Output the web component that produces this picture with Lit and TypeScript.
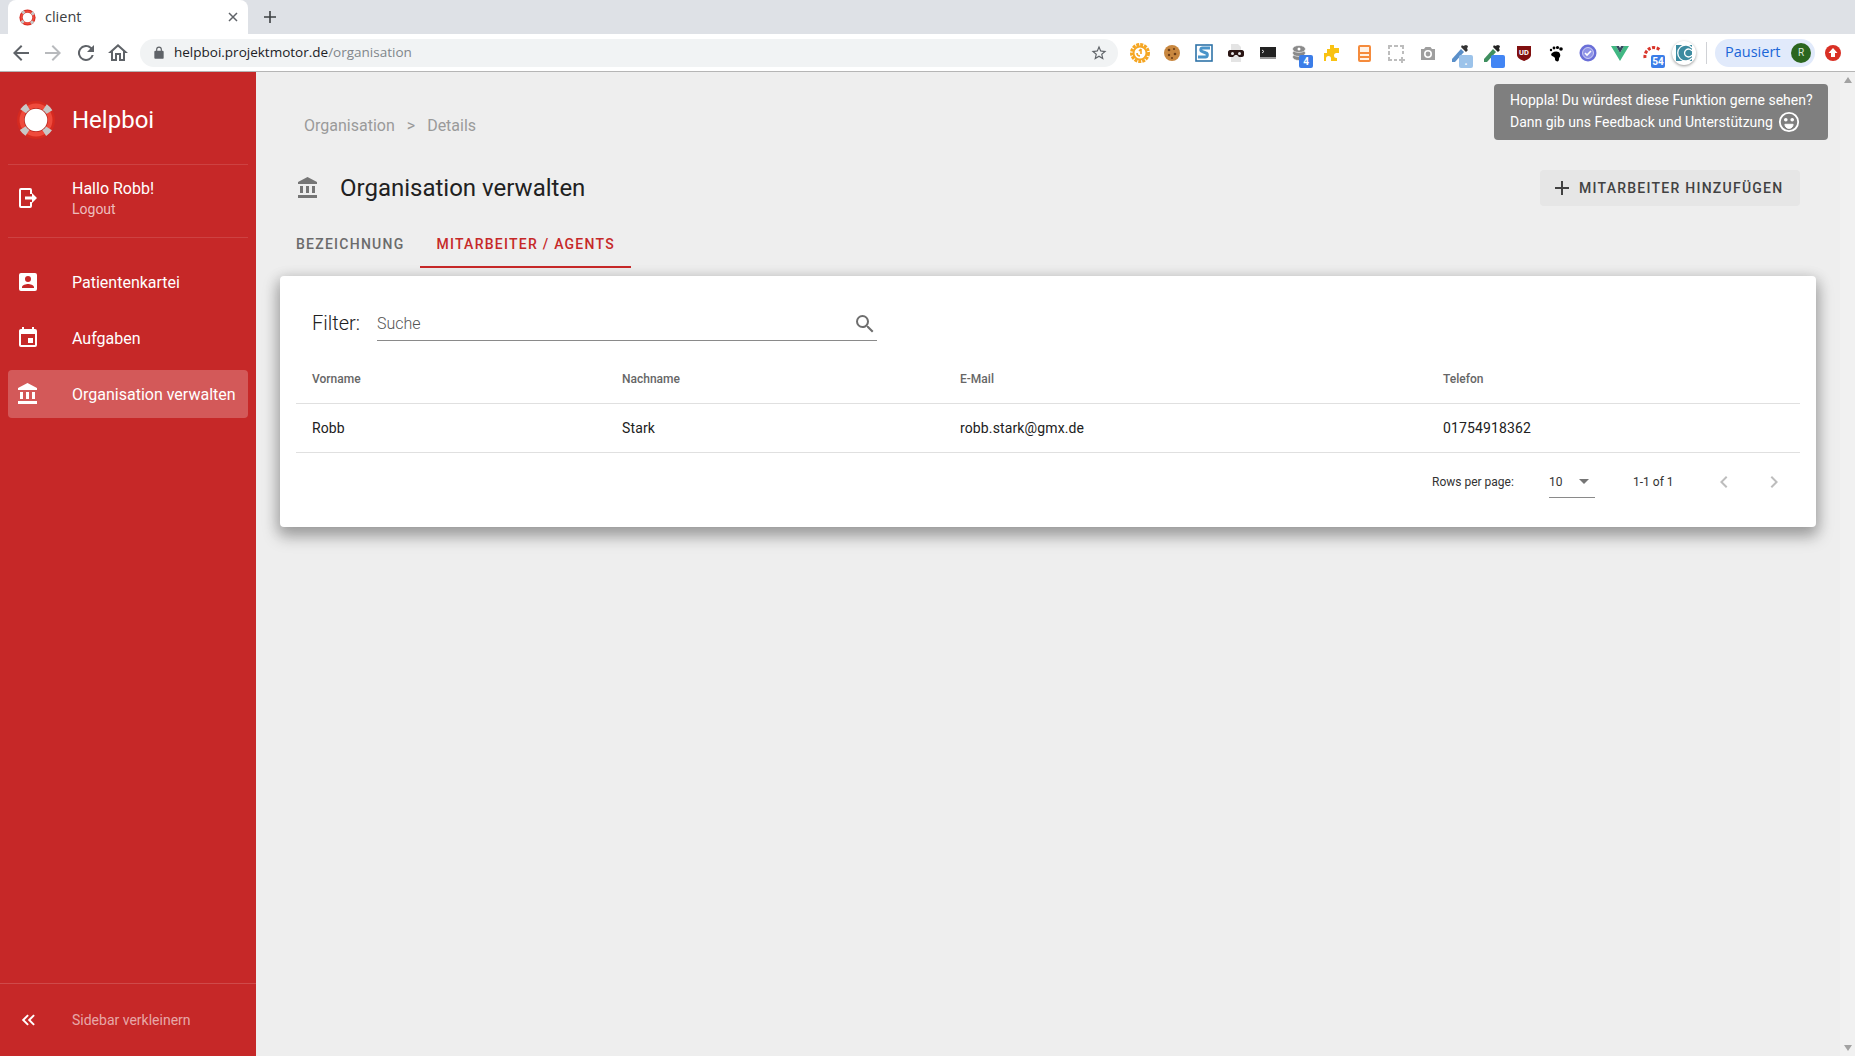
import { LitElement, css, html, svg } from "lit";
import { customElement } from "lit/decorators.js";

const bankIcon = svg`<path d="M4 10v7h3v-7H4zm6 0v7h3v-7h-3zM2 22h19v-3H2v3zm14-12v7h3v-7h-3zm-4.500-9L2 6v2h19V6l-9.500-5z"/>`;
const logoutIcon = svg`<path d="M15 8V4a1 1 0 0 0-1-1H5a1 1 0 0 0-1 1v16a1 1 0 0 0 1 1h9a1 1 0 0 0 1-1v-4" fill="none" stroke="#fff" stroke-width="2"/><path d="M9 10.500h7v-3.500l5 5-5 5v-3.500H9z"/>`;
const cardIcon = svg`<path d="M19 3H5a2 2 0 0 0-2 2v14a2 2 0 0 0 2 2h14a2 2 0 0 0 2-2V5a2 2 0 0 0-2-2zm-7 3a3 3 0 1 1 0 6 3 3 0 0 1 0-6zm6 12H6v-1c0-2 4-3.100 6-3.100s6 1.100 6 3.100v1z"/>`;
const calendarIcon = svg`<path d="M19 19H5V8h14m-3-7v2H8V1H6v2H5c-1.110 0-2 .89-2 2v14a2 2 0 0 0 2 2h14a2 2 0 0 0 2-2V5a2 2 0 0 0-2-2h-1V1m-1 11h-5v5h5v-5z"/>`;

function logo(size: number) {
  return html`<svg width=${size} height=${size} viewBox="0 0 40 40">
    <circle cx="20" cy="20" r="19" fill="#d62a20"/>
    <circle cx="20" cy="20" r="16.500" fill="#ef4a3c"/>
    <circle cx="20" cy="20" r="15.250" fill="none" stroke="#c8c8c8" stroke-width="7.500" stroke-dasharray="6.500 17.450" stroke-dashoffset="-8.730"/>
    <circle cx="20" cy="20" r="12" fill="#b3201a"/>
    <circle cx="20" cy="20" r="11.300" fill="#fff"/>
  </svg>`;
}

const extensions = [
  html`<svg width="20" height="20" viewBox="0 0 20 20"><circle cx="10" cy="10" r="8.500" fill="none" stroke="#f5a623" stroke-width="3" stroke-dasharray="3 1"/><circle cx="10" cy="10" r="6.500" fill="none" stroke="#f5a623" stroke-width="2"/><path d="M7 10a3 3 0 0 0 3 3M11 6v5M9 8l2-2" fill="none" stroke="#f5a623" stroke-width="1.600"/></svg>`,
  html`<svg width="20" height="20" viewBox="0 0 20 20"><circle cx="10" cy="10" r="8" fill="#c8873f"/><g fill="#6b3d17"><circle cx="7" cy="7" r="1.300"/><circle cx="12" cy="6" r="1.100"/><circle cx="13" cy="11" r="1.300"/><circle cx="7" cy="12" r="1.200"/><circle cx="10" cy="15" r="1"/></g></svg>`,
  html`<svg width="20" height="20" viewBox="0 0 20 20"><rect x="2" y="2" width="16" height="16" fill="#fff" stroke="#2f73a8" stroke-width="1.600"/><path d="M16 5H8.500c-2 0-2.500 3 0 3.600L12 10c2 .7 1.600 4-.5 4H4" fill="none" stroke="#4a94c9" stroke-width="3"/></svg>`,
  html`<svg width="20" height="20" viewBox="0 0 20 20"><path d="M5 1h7l3 3v15H5z" fill="#e4e4e4"/><path d="M2 9c0-1 1-2 2-2h12c1 0 2 1 2 2v3c0 1-1 2-2 2h-3l-2-2H9l-2 2H4c-1 0-2-1-2-2z" fill="#2a1614"/><circle cx="6.500" cy="10.500" r="1.500" fill="#e8e8e8"/><circle cx="13.500" cy="10.500" r="1.500" fill="#e8e8e8"/></svg>`,
  html`<svg width="20" height="20" viewBox="0 0 20 20"><rect x="2" y="4" width="16" height="12" fill="#222"/><rect x="2" y="14" width="16" height="2" fill="#999"/><path d="M4 7l2 1.500L4 10" fill="none" stroke="#ddd" stroke-width="1"/></svg>`,
  html`<svg width="20" height="20" viewBox="0 0 20 20"><g fill="#8a8a8a" stroke="#fff" stroke-width=".6"><ellipse cx="9" cy="14" rx="6.500" ry="3.500"/><ellipse cx="9" cy="10" rx="6.500" ry="3.500"/><ellipse cx="9" cy="6" rx="6.500" ry="3.500"/></g><circle cx="9" cy="6" r="1.500" fill="#fff"/></svg><span class="badge">4</span>`,
  html`<svg width="20" height="20" viewBox="0 0 20 20"><path d="M8 2h4v3h5v5h-2.500a2.500 2.500 0 0 0 0 5H15v3H9v-2.500a2.500 2.500 0 0 0-5 0V18H2v-8h3V6h3z" fill="#f9c213"/></svg>`,
  html`<svg width="20" height="20" viewBox="0 0 20 20"><rect x="4" y="2" width="13" height="17" rx="2" fill="#f58b3c"/><rect x="6" y="4" width="9" height="5" fill="#fff2e6"/><rect x="6" y="11" width="9" height="2" fill="#fff2e6"/><rect x="6" y="15" width="9" height="2" fill="#fff2e6"/></svg>`,
  html`<svg width="20" height="20" viewBox="0 0 20 20" fill="none" stroke="#bdbdbd" stroke-width="2"><path d="M6 3H3v3M8 3h4M14 3h3v3M3 8v4M17 8v3M3 14v3h3M8 17h3M13 17h6M16 14v6"/></svg>`,
  html`<svg width="20" height="20" viewBox="0 0 20 20"><path d="M3 6h3l1.500-2h5L14 6h3v11H3z" fill="#9e9e9e"/><circle cx="10" cy="11" r="3.200" fill="none" stroke="#fff" stroke-width="1.600"/></svg>`,
  html`<svg width="20" height="20" viewBox="0 0 20 20"><path d="M2 16 11 6l3 3-9 10H2z" fill="#5a8fc9"/><path d="M11 4l5 5 2-2-1-1 1-3-2-1-3 1-1-1z" fill="#333"/></svg><span class="swatch" style="background:#9cc3ea">.</span>`,
  html`<svg width="20" height="20" viewBox="0 0 20 20"><path d="M2 16 11 6l3 3-9 10H2z" fill="#3f8f5f"/><path d="M11 4l5 5 2-2-1-1 1-3-2-1-3 1-1-1z" fill="#222"/></svg><span class="swatch" style="background:#4285f4"></span>`,
  html`<svg width="20" height="20" viewBox="0 0 20 20"><path d="M3 3h14v9c0 3-4 5-7 6-3-1-7-3-7-6z" fill="#800f0f"/><text x="10" y="12" font-size="7.500" text-anchor="middle" fill="#fff" font-family="Roboto, sans-serif" font-weight="700">UD</text></svg>`,
  html`<svg width="20" height="20" viewBox="0 0 20 20"><path d="M6 10c3-2 7-2 8 1 1 3-1 3-1 5s-1 3-3 2 0-3-2-4-4-2-2-4z" fill="#000"/><g fill="#000"><circle cx="5" cy="7" r="1.200"/><circle cx="8" cy="5" r="1.400"/><circle cx="11.500" cy="4.500" r="1.600"/><circle cx="15" cy="6" r="1.800"/></g></svg>`,
  html`<svg width="20" height="20" viewBox="0 0 20 20"><circle cx="10" cy="10" r="8.500" fill="#6a6fd8"/><circle cx="10" cy="10" r="5.500" fill="#8f93e6" stroke="#fff" stroke-width=".6"/><path d="M7 10l2 2 4-4" fill="none" stroke="#fff" stroke-width="1.600"/></svg>`,
  html`<svg width="20" height="20" viewBox="0 0 20 20"><path d="M1 3h5l4 7 4-7h5l-9 15z" fill="#41b883"/><path d="M6 3h3l1 2 1-2h3l-4 7z" fill="#35495e"/></svg>`,
  html`<svg width="20" height="20" viewBox="0 0 20 20"><path d="M3 15a9 9 0 0 1 15-8" fill="none" stroke="#d9352a" stroke-width="3" stroke-dasharray="3 1.500"/></svg><span class="badge">54</span>`,
  html`<span class="ext-disc"><svg width="20" height="20" viewBox="0 0 20 20"><rect x="2" y="2" width="16" height="16" fill="#3c8ba0"/><path d="M18 5a8 8 0 1 0 0 10M18 8a4 4 0 1 0 0 4" fill="none" stroke="#fff" stroke-width="1.300"/></svg></span>`,
];

@customElement("browser-chrome")
export class BrowserChrome extends LitElement {
  static styles = css`
    :host {
      display: block;
      font-family: "Open Sans", "Noto Sans", sans-serif;
    }
    .tabstrip {
      height: 34px;
      background: #dee1e6;
      display: flex;
      padding-left: 8px;
    }
    .tab {
      width: 240px;
      background: #fff;
      border-radius: 8px 8px 0 0;
      display: flex;
      align-items: center;
      padding: 0 10px 0 11px;
      box-sizing: border-box;
      font-size: 14.500px;
      color: #3c4043;
      gap: 9px;
    }
    .tab .title {
      flex: 1;
      padding-bottom: 1px;
    }
    .tab-close {
      display: block;
      width: 10px;
      height: 10px;
    }
    .new-tab {
      margin: 9px 0 0 14px;
      display: block;
    }
    .toolbar {
      height: 37px;
      border-bottom: 1px solid #b5b5b5;
      background: #fff;
      display: flex;
      align-items: center;
      padding-left: 9px;
    }
    .nav {
      display: flex;
      width: 131px;
      gap: 8.300px;
    }
    .nav svg {
      display: block;
    }
    .omnibox {
      width: 978px;
      height: 28px;
      border-radius: 14px;
      background: #f1f3f4;
      display: flex;
      align-items: center;
      box-sizing: border-box;
      padding: 0 10px 0 12px;
      font-size: 13.500px;
      color: #202124;
    }
    .url {
      flex: 1;
      margin-left: 8px;
      padding-bottom: 2px;
    }
    .url span {
      color: #80868b;
    }
    .exts {
      display: flex;
      margin-left: 6px;
    }
    .ext {
      position: relative;
      width: 32px;
      height: 24px;
      display: flex;
      align-items: center;
      justify-content: center;
    }
    .badge,
    .swatch {
      position: absolute;
      right: 3px;
      bottom: -3px;
      min-width: 12px;
      height: 13px;
      border-radius: 2px;
      background: #3b7de8;
      color: #fff;
      font: 700 10px/13px Roboto, sans-serif;
      text-align: center;
      padding: 0 1px;
    }
    .ext-disc {
      width: 24px;
      height: 24px;
      border-radius: 50%;
      background: #fff;
      box-shadow: 0 1px 3px rgba(0, 0, 0, 0.4);
      display: flex;
      align-items: center;
      justify-content: center;
    }
    .sep {
      width: 1px;
      height: 22px;
      background: #d0d2d6;
      margin: 0 8px 0 6px;
    }
    .profile {
      width: 100px;
      height: 28px;
      box-sizing: border-box;
      border-radius: 14px;
      background: #e1eafb;
      color: #1a66d8;
      font-size: 14.500px;
      display: flex;
      align-items: center;
      justify-content: space-between;
      padding: 0 4px 2px 10px;
    }
    .avatar {
      width: 20px;
      height: 20px;
      margin-bottom: -2px;
      border-radius: 50%;
      background: #2b661f;
      color: #dfe8dc;
      font: 10px/20px Roboto, sans-serif;
      text-align: center;
    }
    .update {
      margin-left: 8px;
      display: block;
    }
  `;

  render() {
    return html`
      <div class="tabstrip">
        <div class="tab">
          ${logo(17)}
          <span class="title">client</span>
          <svg class="tab-close" viewBox="0 0 10 10" stroke="#5f6368" stroke-width="1.500"><path d="M1 1l8 8M9 1l-8 8"/></svg>
        </div>
        <svg class="new-tab" width="16" height="16" viewBox="0 0 16 16" stroke="#3c4043" stroke-width="1.600"><path d="M8 2v12M2 8h12"/></svg>
      </div>
      <div class="toolbar">
        <div class="nav">
          ${[
            svg`<path d="M20 11H7.800l5.600-5.600L12 4l-8 8 8 8 1.400-1.400L7.800 13H20z" fill="#5f6368"/>`,
            svg`<path d="M4 11h12.200l-5.600-5.600L12 4l8 8-8 8-1.400-1.400 5.600-5.600H4z" fill="#b8babd"/>`,
            svg`<path d="M17.650 6.350A8 8 0 1 0 19.730 14h-2.080A6 6 0 1 1 12 6c1.660 0 3.140.69 4.220 1.780L13 11h7V4z" fill="#5f6368"/>`,
            svg`<path d="M12 5.700l5 4.500V18h-2v-6H9v6H7v-7.800zM12 3 2 12h3v8h6v-6h2v6h6v-8h3z" fill="#5f6368"/>`,
          ].map((p) => html`<svg width="24" height="24" viewBox="0 0 24 24">${p}</svg>`)}
        </div>
        <div class="omnibox">
          <svg width="14" height="14" viewBox="0 0 24 24" fill="#5f6368"><path d="M18 8h-1V6A5 5 0 0 0 7 6v2H6a2 2 0 0 0-2 2v10c0 1.100.9 2 2 2h12a2 2 0 0 0 2-2V10a2 2 0 0 0-2-2zM9 6a3 3 0 0 1 6 0v2H9z"/></svg>
          <div class="url">helpboi.projektmotor.de<span>/organisation</span></div>
          <svg width="18" height="18" viewBox="0 0 24 24" fill="#5f6368"><path d="m22 9.200-7.200-.6L12 2 9.200 8.600 2 9.200l5.500 4.700L5.800 21l6.200-3.700 6.200 3.700-1.700-7.100zm-10 6.200-3.800 2.300 1-4.300-3.300-2.900 4.400-.4L12 6.100l1.700 4 4.400.4-3.300 2.900 1 4.300z"/></svg>
        </div>
        <div class="exts">${extensions.map((e) => html`<div class="ext">${e}</div>`)}</div>
        <div class="sep"></div>
        <div class="profile">Pausiert<span class="avatar">R</span></div>
        <svg class="update" width="20" height="20" viewBox="0 0 20 20"><circle cx="10" cy="10" r="8" fill="#d93025"/><path d="M10 5l4.500 5H12v4H8v-4H5.500z" fill="#fff"/></svg>
      </div>
    `;
  }
}

@customElement("app-sidebar")
export class AppSidebar extends LitElement {
  static styles = css`
    :host {
      display: flex;
      flex-direction: column;
      width: 256px;
      flex: none;
      background: #c62828;
      color: #fff;
      font-family: Roboto, sans-serif;
      box-sizing: border-box;
      padding: 0 8px;
    }
    .brand {
      height: 93px;
      display: flex;
      align-items: center;
      border-bottom: 1px solid rgba(255, 255, 255, 0.12);
      box-sizing: border-box;
      padding-top: 3px;
    }
    .slot {
      width: 64px;
      flex: none;
      display: flex;
      padding-left: 8px;
      box-sizing: border-box;
    }
    .brand .name {
      font-size: 24px;
      font-weight: 400;
    }
    .user {
      height: 73px;
      box-sizing: border-box;
      padding-bottom: 6px;
      display: flex;
      align-items: center;
      border-bottom: 1px solid rgba(255, 255, 255, 0.12);
    }
    .user .hello {
      font-size: 16px;
      line-height: 22px;
    }
    .user .logout {
      font-size: 14px;
      line-height: 18px;
      color: rgba(255, 255, 255, 0.7);
    }
    nav {
      display: flex;
      flex-direction: column;
      gap: 8px;
      margin-top: 20px;
      flex: 1;
    }
    .item {
      height: 48px;
      display: flex;
      align-items: center;
      border-radius: 4px;
      font-size: 16px;
    }
    .item.active {
      background: rgba(255, 255, 255, 0.23);
    }
    svg {
      display: block;
      fill: #fff;
    }
    .foot {
      height: 73px;
      box-sizing: border-box;
      border-top: 1px solid rgba(255, 255, 255, 0.16);
      margin: 0 -8px;
      padding: 0 8px;
      display: flex;
      align-items: center;
      font-size: 14px;
      color: rgba(255, 255, 255, 0.6);
    }
  `;

  render() {
    const items = [
      { label: "Patientenkartei", icon: cardIcon },
      { label: "Aufgaben", icon: calendarIcon },
      { label: "Organisation verwalten", icon: bankIcon, active: true },
    ];
    return html`
      <div class="brand">
        <div class="slot">${logo(40)}</div>
        <div class="name">Helpboi</div>
      </div>
      <div class="user">
        <div class="slot"><svg width="24" height="24" viewBox="0 0 24 24">${logoutIcon}</svg></div>
        <div>
          <div class="hello">Hallo Robb!</div>
          <div class="logout">Logout</div>
        </div>
      </div>
      <nav>
        ${items.map(
          (i) => html`<div class="item ${i.active ? "active" : ""}">
            <div class="slot"><svg width="24" height="24" viewBox="0 0 24 24">${i.icon}</svg></div>
            ${i.label}
          </div>`,
        )}
      </nav>
      <div class="foot">
        <div class="slot">
          <svg width="24" height="24" viewBox="0 0 24 24"><path d="M11.400 17.600 5.800 12l5.600-5.600 1.400 1.400L8.600 12l4.200 4.200zm6 0L11.800 12l5.600-5.600 1.400 1.400L14.600 12l4.200 4.200z"/></svg>
        </div>
        Sidebar verkleinern
      </div>
    `;
  }
}

@customElement("member-table")
export class MemberTable extends LitElement {
  static styles = css`
    :host {
      display: block;
      background: #fff;
      border-radius: 4px;
      box-shadow: 0 8px 16px 2px rgba(0, 0, 0, 0.28), 0 3px 14px 2px rgba(0, 0, 0, 0.12);
      padding: 16px 16px 0;
      height: 251px;
      box-sizing: border-box;
    }
    .filter {
      display: flex;
      align-items: flex-start;
      padding: 15px 0 0 16px;
      height: 63px;
      box-sizing: border-box;
    }
    .filter label {
      font-size: 20px;
      font-weight: 300;
      color: #212121;
      width: 65px;
      line-height: 32px;
    }
    .search {
      width: 500px;
      height: 33px;
      border-bottom: 1px solid #8a8a8a;
      display: flex;
      align-items: center;
      justify-content: space-between;
      font-size: 16px;
      font-weight: 300;
      color: #555;
    }
    .search svg {
      display: block;
      fill: #6e6e6e;
    }
    .row {
      display: grid;
      grid-template-columns: 310px 338px 483px 1fr;
      border-bottom: 1px solid #e0e0e0;
      font-size: 14px;
      letter-spacing: 0.13px;
      color: #212121;
      align-items: center;
    }
    .row > div {
      padding-left: 16px;
    }
    .head {
      height: 48px;
      font-size: 12px;
      font-weight: 500;
      letter-spacing: 0;
      color: #666;
    }
    .body {
      height: 49px;
      padding-bottom: 1px;
      box-sizing: border-box;
    }
    .pager {
      height: 58px;
      display: flex;
      align-items: center;
      font-size: 12px;
      color: #333;
      padding-left: 1136px;
    }
    .rows-label {
      flex: none;
      width: 117px;
      white-space: nowrap;
    }
    .select {
      flex: none;
      width: 46px;
      height: 32px;
      display: flex;
      align-items: center;
      justify-content: space-between;
      border-bottom: 1px solid #8a8a8a;
      box-sizing: border-box;
    }
    .select svg {
      margin-right: 6px;
    }
    .range {
      flex: none;
      margin-left: 38px;
      width: 79px;
      white-space: nowrap;
    }
    .chev {
      flex: none;
      width: 50px;
      display: flex;
    }
    .chev:last-child {
      width: 38px;
    }
    .chev svg {
      display: block;
      fill: #bdbdbd;
    }
  `;

  render() {
    return html`
      <div class="filter">
        <label>Filter:</label>
        <div class="search">
          <span>Suche</span>
          <svg width="24" height="24" viewBox="0 0 24 24"><path d="M15.500 14h-.79l-.28-.27A6.470 6.470 0 0 0 16 9.500 6.500 6.500 0 1 0 9.500 16c1.610 0 3.090-.59 4.230-1.570l.27.28v.79l5 4.990L20.490 19l-4.990-5zm-6 0C7.010 14 5 11.990 5 9.500S7.010 5 9.500 5 14 7.010 14 9.500 11.990 14 9.500 14z"/></svg>
        </div>
      </div>
      <div class="row head">
        <div>Vorname</div><div>Nachname</div><div>E-Mail</div><div>Telefon</div>
      </div>
      <div class="row body">
        <div>Robb</div><div>Stark</div><div>robb.stark@gmx.de</div><div>01754918362</div>
      </div>
      <div class="pager">
        <span class="rows-label">Rows per page:</span>
        <div class="select">
          <span>10</span>
          <svg width="10" height="5" viewBox="0 0 10 5" fill="#757575"><path d="M0 0h10L5 5z"/></svg>
        </div>
        <div class="range">1-1 of 1</div>
        <div class="chev"><svg width="24" height="24" viewBox="0 0 24 24"><path d="M15.410 7.410 14 6l-6 6 6 6 1.410-1.410L10.830 12z"/></svg></div>
        <div class="chev"><svg width="24" height="24" viewBox="0 0 24 24"><path d="M10 6 8.590 7.410 13.170 12l-4.580 4.590L10 18l6-6z"/></svg></div>
      </div>
    `;
  }
}

@customElement("app-root")
export class AppRoot extends LitElement {
  static styles = css`
    :host {
      display: flex;
      flex-direction: column;
      height: 1056px;
      overflow: hidden;
      font-family: Roboto, sans-serif;
    }
    .main {
      flex: 1;
      display: flex;
      min-height: 0;
    }
    .content {
      flex: 1;
      min-width: 0;
      position: relative;
      background: #eee;
      padding: 0 39px 0 24px;
    }
    .crumbs {
      padding: 42px 0 0 24px;
      height: 63px;
      box-sizing: border-box;
      font-size: 16px;
      line-height: 24px;
      color: #9a9a9a;
      display: flex;
      gap: 12px;
    }
    .title-row {
      display: flex;
      align-items: center;
      height: 70px;
      margin-top: 18px;
      padding: 0 16px;
    }
    .title-row svg {
      display: block;
      fill: #757575;
    }
    h1 {
      margin: 0 0 0 20px;
      font-size: 24px;
      font-weight: 400;
      color: #212121;
      flex: 1;
    }
    .add {
      height: 36px;
      width: 260px;
      background: #e6e6e6;
      border-radius: 4px;
      display: flex;
      align-items: center;
      box-sizing: border-box;
      padding-left: 10px;
      gap: 5px;
      font-size: 14px;
      font-weight: 500;
      letter-spacing: 1.250px;
      color: #424242;
    }
    .add svg {
      fill: #424242;
    }
    .tabs {
      display: flex;
      height: 48px;
      margin-top: -3px;
      box-sizing: border-box;
    }
    .tabs div {
      height: 48px;
      box-sizing: border-box;
      padding: 0 16px;
      display: flex;
      align-items: center;
      font-size: 14px;
      font-weight: 500;
      letter-spacing: 1.250px;
      color: #6b6b6b;
    }
    .tabs .on {
      color: #c62828;
      border-bottom: 2px solid #c62828;
      padding-top: 2px;
    }
    member-table {
      margin-top: 8px;
    }
    .toast {
      position: absolute;
      top: 12px;
      right: 27px;
      width: 334px;
      height: 56px;
      box-sizing: border-box;
      padding: 5px 0 0 16px;
      background: #7f7f7f;
      border-radius: 4px;
      color: #fff;
      font-size: 14px;
      line-height: 22px;
      z-index: 1;
    }
    .toast svg {
      vertical-align: -6px;
      margin-left: 2px;
    }
    .scrollbar {
      position: absolute;
      top: 0;
      right: 0;
      bottom: 0;
      width: 15px;
      background: #f1f1f1;
    }
    .scrollbar svg {
      position: absolute;
      left: 3.500px;
      display: block;
      fill: #a3a3a3;
    }
  `;

  render() {
    return html`
      <browser-chrome></browser-chrome>
      <div class="main">
        <app-sidebar></app-sidebar>
        <div class="content">
          <div class="crumbs"><span>Organisation</span><span>&gt;</span><span>Details</span></div>
          <div class="title-row">
            <svg width="24" height="24" viewBox="0 0 24 24">${bankIcon}</svg>
            <h1>Organisation verwalten</h1>
            <div class="add">
              <svg width="24" height="24" viewBox="0 0 24 24"><path d="M19 13h-6v6h-2v-6H5v-2h6V5h2v6h6z"/></svg>
              MITARBEITER HINZUFÜGEN
            </div>
          </div>
          <div class="tabs">
            <div>BEZEICHNUNG</div>
            <div class="on">MITARBEITER / AGENTS</div>
          </div>
          <member-table></member-table>
          <div class="toast">
            Hoppla! Du würdest diese Funktion gerne sehen?<br />
            Dann gib uns Feedback und Unterstützung
            <svg width="22" height="22" viewBox="0 0 24 24" fill="none" stroke="#fff" stroke-width="2"><circle cx="12" cy="12" r="10"/><circle cx="8.500" cy="9.500" r="1" fill="#fff"/><circle cx="15.500" cy="9.500" r="1" fill="#fff"/><path d="M7.500 14.500h9a4.500 4.500 0 0 1-9 0z" fill="#fff" stroke-width="1"/></svg>
          </div>
          <div class="scrollbar">
            <svg style="top:5px" width="8" height="6" viewBox="0 0 8 6"><path d="M4 0 8 6H0z"/></svg>
            <svg style="bottom:5px" width="8" height="6" viewBox="0 0 8 6"><path d="M4 6 8 0H0z"/></svg>
          </div>
        </div>
      </div>
    `;
  }
}
